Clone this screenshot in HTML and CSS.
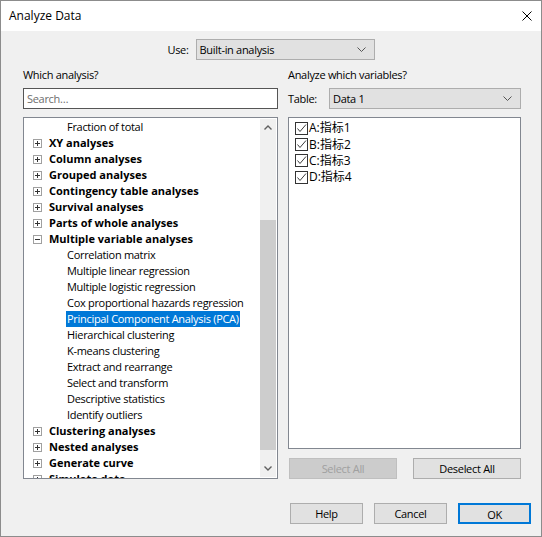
FILE: index.html
```html
<!DOCTYPE html>
<html>
<head>
<meta charset="utf-8">
<link rel="stylesheet" href="styles.css">
</head>
<body>
<div class="window">
  <div class="titlebar">
    <span class="title">Analyze Data</span>
    <svg class="close" width="10" height="10" viewBox="0 0 10 10"><path d="M0.5 0.5 L9.5 9.5 M9.5 0.5 L0.5 9.5" stroke="#000" stroke-width="1" fill="none"/></svg>
  </div>
  <div class="content">
    <div class="use-row">
      <span class="lbl">Use:</span>
      <div class="combo use-combo"><span>Built-in analysis</span><svg width="9" height="5" viewBox="0 0 9 5"><polyline points="0.5,0.5 4.5,4.5 8.5,0.5" fill="none" stroke="#555" stroke-width="1"/></svg></div>
    </div>
    <div class="main">
      <div class="col left">
        <div class="heading">Which analysis?</div>
        <div class="search">Search…</div>
        <div class="tree">
          <div class="tree-list">
            <div class="row child"><span class="txt">Fraction of total</span></div>
            <div class="row group"><span class="exp plus"></span><span class="txt">XY analyses</span></div>
            <div class="row group"><span class="exp plus"></span><span class="txt">Column analyses</span></div>
            <div class="row group"><span class="exp plus"></span><span class="txt">Grouped analyses</span></div>
            <div class="row group"><span class="exp plus"></span><span class="txt">Contingency table analyses</span></div>
            <div class="row group"><span class="exp plus"></span><span class="txt">Survival analyses</span></div>
            <div class="row group"><span class="exp plus"></span><span class="txt">Parts of whole analyses</span></div>
            <div class="row group"><span class="exp minus"></span><span class="txt">Multiple variable analyses</span></div>
            <div class="row child"><span class="txt">Correlation matrix</span></div>
            <div class="row child"><span class="txt">Multiple linear regression</span></div>
            <div class="row child"><span class="txt">Multiple logistic regression</span></div>
            <div class="row child"><span class="txt">Cox proportional hazards regression</span></div>
            <div class="row child"><span class="txt selected">Principal Component Analysis (PCA)</span></div>
            <div class="row child"><span class="txt">Hierarchical clustering</span></div>
            <div class="row child"><span class="txt">K-means clustering</span></div>
            <div class="row child"><span class="txt">Extract and rearrange</span></div>
            <div class="row child"><span class="txt">Select and transform</span></div>
            <div class="row child"><span class="txt">Descriptive statistics</span></div>
            <div class="row child"><span class="txt">Identify outliers</span></div>
            <div class="row group"><span class="exp plus"></span><span class="txt">Clustering analyses</span></div>
            <div class="row group"><span class="exp plus"></span><span class="txt">Nested analyses</span></div>
            <div class="row group"><span class="exp plus"></span><span class="txt">Generate curve</span></div>
            <div class="row group"><span class="exp plus"></span><span class="txt">Simulate data</span></div>
          </div>
          <div class="vscroll">
            <div class="sb-btn"><svg width="8" height="5" viewBox="0 0 8 5"><polyline points="0.5,4.5 4,1 7.5,4.5" fill="none" stroke="#606060" stroke-width="1.4"/></svg></div>
            <div class="sb-track"><div class="sb-thumb"></div></div>
            <div class="sb-btn"><svg width="8" height="5" viewBox="0 0 8 5"><polyline points="0.5,0.5 4,4 7.5,0.5" fill="none" stroke="#606060" stroke-width="1.4"/></svg></div>
          </div>
        </div>
      </div>
      <div class="col right">
        <div class="heading">Analyze which variables?</div>
        <div class="table-row">
          <span class="lbl table-lbl">Table:</span>
          <div class="combo table-combo"><span>Data 1</span><svg width="9" height="5" viewBox="0 0 9 5"><polyline points="0.5,0.5 4.5,4.5 8.5,0.5" fill="none" stroke="#555" stroke-width="1"/></svg></div>
        </div>
        <div class="varlist">
          <div class="var"><span class="cb"><svg width="11" height="11" viewBox="0 0 11 11"><polyline points="1.5,5.5 4,8.5 10,1.5" fill="none" stroke="#3c3c3c" stroke-width="1"/></svg></span><span class="vtxt">A:指标1</span></div>
          <div class="var"><span class="cb"><svg width="11" height="11" viewBox="0 0 11 11"><polyline points="1.5,5.5 4,8.5 10,1.5" fill="none" stroke="#3c3c3c" stroke-width="1"/></svg></span><span class="vtxt">B:指标2</span></div>
          <div class="var"><span class="cb"><svg width="11" height="11" viewBox="0 0 11 11"><polyline points="1.5,5.5 4,8.5 10,1.5" fill="none" stroke="#3c3c3c" stroke-width="1"/></svg></span><span class="vtxt">C:指标3</span></div>
          <div class="var"><span class="cb"><svg width="11" height="11" viewBox="0 0 11 11"><polyline points="1.5,5.5 4,8.5 10,1.5" fill="none" stroke="#3c3c3c" stroke-width="1"/></svg></span><span class="vtxt">D:指标4</span></div>
        </div>
        <div class="sel-row">
          <button class="btn disabled sel-btn">Select All</button>
          <button class="btn sel-btn">Deselect All</button>
        </div>
      </div>
    </div>
    <div class="footer">
      <button class="btn foot-btn">Help</button>
      <button class="btn foot-btn">Cancel</button>
      <button class="btn foot-btn default">OK</button>
    </div>
  </div>
</div>
</body>
</html>
```
FILE: styles.css
```css
html, body {
  margin: 0;
  padding: 0;
}
body {
  font-family: "Open Sans", "Noto Sans CJK SC", sans-serif;
  font-size: 11px;
  letter-spacing: -0.3px;
  color: #000;
  background: #f0f0f0;
}
.window {
  width: 542px;
  height: 537px;
  box-sizing: border-box;
  border: 1px solid #8c8c8c;
  display: flex;
  flex-direction: column;
  background: #f0f0f0;
}
.titlebar {
  height: 30px;
  flex: none;
  background: #fff;
  display: flex;
  align-items: center;
  justify-content: space-between;
  padding: 0 9px 0 8px;
}
.title {
  font-size: 12px;
  line-height: 16px;
  letter-spacing: 0;
}
.close {
  display: block;
}
.content {
  flex: 1;
  display: flex;
  flex-direction: column;
}
.use-row {
  margin-top: 8px;
  display: flex;
  justify-content: center;
  align-items: center;
  gap: 7px;
  height: 21px;
}
.lbl {
  line-height: 16px;
}
.combo {
  box-sizing: border-box;
  height: 21px;
  background: #e1e1e1;
  border: 1px solid #adadad;
  display: flex;
  align-items: center;
  justify-content: space-between;
  padding: 0 8px 0 3px;
}
.combo svg {
  display: block;
}
.use-combo {
  width: 179px;
}
.main {
  display: flex;
  gap: 10px;
  padding-left: 22px;
  margin-top: 7px;
}
.col {
  display: flex;
  flex-direction: column;
}
.left {
  width: 255px;
}
.right {
  width: 233px;
}
.heading {
  height: 16px;
  line-height: 16px;
}
.search {
  margin-top: 5px;
  box-sizing: border-box;
  height: 21px;
  border: 1px solid #555;
  background: #fff;
  color: #6d6d6d;
  padding-left: 3px;
  line-height: 19px;
}
.tree {
  margin-top: 8px;
  box-sizing: border-box;
  height: 362px;
  border: 1px solid #828790;
  background: #fff;
  display: flex;
}
.tree-list {
  flex: 1;
  overflow: hidden;
  padding-top: 1px;
}
.row {
  height: 16px;
  display: flex;
  align-items: center;
  white-space: nowrap;
}
.row.group {
  padding-left: 9px;
  font-weight: bold;
  letter-spacing: 0;
}
.row.child {
  padding-left: 42px;
}
.txt {
  padding: 0 1px;
  line-height: 16px;
  height: 16px;
}
.row.group .txt {
  padding: 0;
}
.selected {
  background: #0078d7;
  color: #fff;
}
.exp {
  box-sizing: border-box;
  width: 9px;
  height: 9px;
  border: 1px solid #a0a0a0;
  margin-right: 7px;
  position: relative;
  flex: none;
}
.exp::before {
  content: "";
  position: absolute;
  left: 1px;
  top: 3px;
  width: 5px;
  height: 1px;
  background: #333;
}
.exp.plus::after {
  content: "";
  position: absolute;
  left: 3px;
  top: 1px;
  width: 1px;
  height: 5px;
  background: #333;
}
.vscroll {
  width: 16px;
  margin: 1px 1px 1px 0;
  background: #f0f0f0;
  display: flex;
  flex-direction: column;
}
.sb-btn {
  height: 17px;
  display: flex;
  align-items: center;
  justify-content: center;
  flex: none;
}
.sb-btn svg {
  display: block;
}
.sb-track {
  flex: 1;
  padding-top: 84px;
}
.sb-thumb {
  height: 230px;
  background: #cdcdcd;
}
.table-row {
  margin-top: 5px;
  display: flex;
  align-items: center;
  height: 21px;
}
.table-lbl {
  width: 41px;
  flex: none;
}
.table-combo {
  flex: 1;
}
.varlist {
  margin-top: 8px;
  box-sizing: border-box;
  height: 332px;
  border: 1px solid #828790;
  background: #fff;
  padding: 2px 0 0 6px;
}
.var {
  height: 16.4px;
  display: flex;
  align-items: center;
}
.cb {
  box-sizing: border-box;
  width: 13px;
  height: 13px;
  border: 1px solid #333;
  background: #fff;
  flex: none;
  display: flex;
  align-items: center;
  justify-content: center;
}
.cb svg {
  display: block;
}
.vtxt {
  margin-left: 1px;
  font-size: 12px;
  line-height: 16px;
  letter-spacing: 0;
}
.sel-row {
  margin-top: 9px;
  display: flex;
  justify-content: space-between;
  padding-left: 1px;
}
.btn {
  box-sizing: border-box;
  font-family: inherit;
  font-size: 11px;
  letter-spacing: -0.3px;
  color: #000;
  background: #e1e1e1;
  border: 1px solid #adadad;
  height: 21px;
  padding: 0;
  margin: 0;
  line-height: 19px;
}
.sel-btn {
  width: 108px;
}
.disabled {
  background: #cccccc;
  border-color: #bfbfbf;
  color: #a0a0a0;
}
.footer {
  margin-top: 24px;
  display: flex;
  justify-content: flex-end;
  gap: 11px;
  padding-right: 10px;
}
.foot-btn {
  width: 73px;
}
.default {
  border: 2px solid #0078d7;
}
```
